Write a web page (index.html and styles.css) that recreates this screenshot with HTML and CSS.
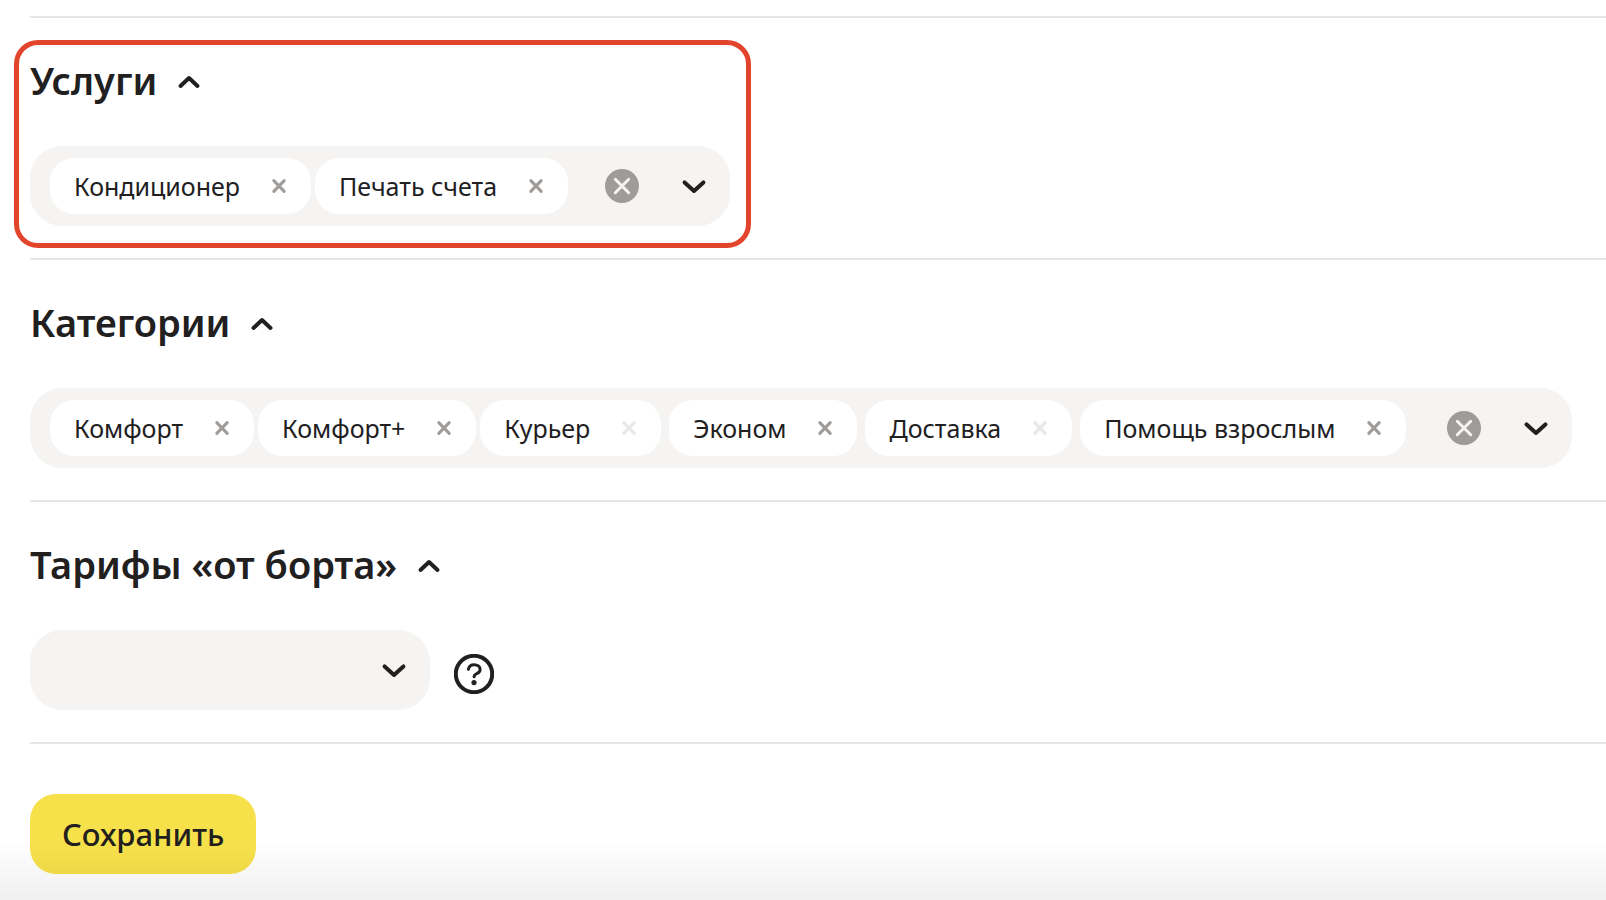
FILE: index.html
```html
<!DOCTYPE html>
<html lang="ru">
<head>
<meta charset="utf-8">
<meta name="viewport" content="width=device-width, initial-scale=1">
<title>Услуги и категории</title>
<link rel="stylesheet" href="styles.css">
</head>
<body>
<svg class="sprite" aria-hidden="true">
  <symbol id="up" viewBox="0 0 24 24"><path d="M3.500 18 12 10l8.500 8"/></symbol>
  <symbol id="down" viewBox="0 0 28 28"><path d="M4.600 10.400 14 19l9.400-8.600"/></symbol>
  <symbol id="cross" viewBox="0 0 24 24"><path d="M6.800 6.600l10.400 10.800M17.200 6.600 6.800 17.400"/></symbol>
  <symbol id="clear" viewBox="0 0 34 34"><circle cx="17" cy="17" r="17"/><path d="M10.300 10.300l13.400 13.400M23.700 10.300l-13.400 13.400"/></symbol>
  <symbol id="help" viewBox="0 0 40 40"><circle cx="20" cy="20" r="18.200"/><path class="hook" d="M14.400 15.200c.6-2.900 2.700-4.400 5.700-4.400 3.500 0 6 1.800 6 4.600 0 2.200-1.300 3.300-3.200 4.100-1.900.9-2.800 1.400-2.800 3.300"/><circle class="dot" cx="20" cy="28.600" r="2.600"/></symbol>
</svg>
<main class="form">
  <section class="section section--marked">
    <h2 class="title"><button class="toggle" type="button" aria-expanded="true">Услуги<svg class="icon-up"><use href="#up"/></svg></button></h2>
    <div class="field">
      <ul class="chips">
        <li class="chip">Кондиционер<button class="remove" type="button" aria-label="Удалить Кондиционер"><svg><use href="#cross"/></svg></button></li>
        <li class="chip">Печать счета<button class="remove" type="button" aria-label="Удалить Печать счета"><svg><use href="#cross"/></svg></button></li>
      </ul>
      <button class="clear" type="button" aria-label="Очистить"><svg><use href="#clear"/></svg></button>
      <button class="open" type="button" aria-label="Открыть список"><svg><use href="#down"/></svg></button>
    </div>
  </section>
  <section class="section">
    <h2 class="title"><button class="toggle" type="button" aria-expanded="true">Категории<svg class="icon-up"><use href="#up"/></svg></button></h2>
    <div class="field">
      <ul class="chips">
        <li class="chip">Комфорт<button class="remove" type="button" aria-label="Удалить Комфорт"><svg><use href="#cross"/></svg></button></li>
        <li class="chip">Комфорт+<button class="remove" type="button" aria-label="Удалить Комфорт+"><svg><use href="#cross"/></svg></button></li>
        <li class="chip">Курьер<button class="remove" type="button" disabled aria-label="Удалить Курьер"><svg><use href="#cross"/></svg></button></li>
        <li class="chip chip--spaced">Эконом<button class="remove" type="button" aria-label="Удалить Эконом"><svg><use href="#cross"/></svg></button></li>
        <li class="chip">Доставка<button class="remove" type="button" disabled aria-label="Удалить Доставка"><svg><use href="#cross"/></svg></button></li>
        <li class="chip chip--spaced">Помощь взрослым<button class="remove" type="button" aria-label="Удалить Помощь взрослым"><svg><use href="#cross"/></svg></button></li>
      </ul>
      <button class="clear" type="button" aria-label="Очистить"><svg><use href="#clear"/></svg></button>
      <button class="open" type="button" aria-label="Открыть список"><svg><use href="#down"/></svg></button>
    </div>
  </section>
  <section class="section">
    <h2 class="title"><button class="toggle" type="button" aria-expanded="true">Тарифы «от борта»<svg class="icon-up"><use href="#up"/></svg></button></h2>
    <div class="row">
      <div class="picker">
        <select class="select" aria-label="Тарифы «от борта»"><option value=""></option></select>
        <svg class="picker-icon"><use href="#down"/></svg>
      </div>
      <button class="help" type="button" aria-label="Справка"><svg><use href="#help"/></svg></button>
    </div>
  </section>
  <footer class="actions">
    <button class="save" type="submit">Сохранить</button>
  </footer>
</main>
<div class="fade"></div>
</body>
</html>
```
FILE: styles.css
```css
*, *::after { box-sizing: border-box; }
body {
  margin: 0;
  background: #fff;
  color: #21201f;
  font-family: "Noto Sans", "Open Sans", sans-serif;
  font-size: 25px;
}
button {
  margin: 0;
  padding: 0;
  border: 0;
  background: none;
  color: inherit;
  font: inherit;
  cursor: pointer;
}
svg {
  display: block;
  fill: none;
  stroke: currentColor;
  stroke-linecap: round;
  stroke-linejoin: round;
}
.sprite { position: absolute; width: 0; height: 0; }
.form { padding: 16px 0 0 30px; }
.section {
  position: relative;
  padding: 38px 32px 32px 0;
  border-top: 2px solid #e7e6e6;
}
.section--marked::after {
  content: "";
  position: absolute;
  top: 22px;
  left: -16px;
  width: 737px;
  bottom: 10px;
  border: 5px solid #e2452c;
  border-radius: 24px;
  pointer-events: none;
}
.title {
  margin: 0 0 42px;
  font-size: 38px;
  font-weight: 600;
  line-height: 48px;
}
.toggle { display: flex; align-items: center; gap: 20px; }
.icon-up { width: 24px; height: 24px; stroke-width: 4; }
.field {
  display: flex;
  align-items: center;
  width: fit-content;
  min-width: 699px;
  min-height: 80px;
  padding: 12px 22px 12px 20px;
  border-radius: 32px;
  background: #f5f4f2;
}
.chips { display: flex; gap: 4px; margin: 0 auto 0 0; padding: 0; list-style: none; }
.chip {
  display: flex;
  align-items: center;
  gap: 27px;
  height: 56px;
  padding: 0 20px 0 24px;
  border-radius: 24px;
  background: #fff;
  white-space: nowrap;
}
.chip--spaced { margin: 0 4px; }
.remove { color: #9e9b98; }
.remove svg { width: 24px; height: 24px; stroke-width: 3; }
.remove:disabled { color: #e9e8e7; cursor: default; }
.clear { margin-left: 37px; }
.clear svg { width: 34px; height: 34px; fill: #9e9b98; stroke: none; }
#clear path { stroke: #f5f4f2; stroke-width: 3; }
.open { margin-left: 41px; }
.open svg, .picker-icon { width: 28px; height: 28px; stroke-width: 4; }
.row { display: flex; align-items: center; gap: 24px; }
.picker { position: relative; width: 400px; }
.select {
  display: block;
  width: 100%;
  height: 80px;
  padding: 0 60px 0 24px;
  border: 0;
  border-radius: 32px;
  background: #f5f4f2;
  color: inherit;
  font: inherit;
  appearance: none;
}
.picker-icon { position: absolute; top: 26px; right: 22px; pointer-events: none; }
.help { margin-top: 8px; }
.help svg { width: 40px; height: 40px; stroke-width: 4; }
.hook { stroke-width: 3; }
.dot { fill: currentColor; stroke: none; }
.actions { padding: 50px 0 24px; border-top: 2px solid #e7e6e6; }
.save {
  height: 80px;
  padding: 0 32px;
  border-radius: 26px;
  background: #f7e14b;
  font-size: 31px;
  font-weight: 500;
  line-height: 40px;
}
.fade {
  position: fixed;
  right: 0;
  bottom: 0;
  left: 0;
  height: 60px;
  background: linear-gradient(rgba(0, 0, 0, 0), rgba(0, 0, 0, 0.06));
  pointer-events: none;
}
```
